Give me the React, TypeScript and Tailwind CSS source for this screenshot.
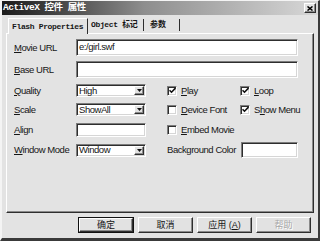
import React from 'react';

const sans = "font-['Liberation_Sans','Noto_Sans_CJK_SC',sans-serif]";
const mono = "font-['Liberation_Mono','Noto_Sans_CJK_SC',monospace]";

// sunken white field, 2px win9x style
const sunken =
  'bg-white border border-t-[#7c7c7c] border-l-[#7c7c7c] border-b-white border-r-white shadow-[inset_1px_1px_0_#2e2e2e,inset_-1px_-1px_0_#d6d6d6]';
const raised =
  'bg-[#e2e2e2] border border-t-white border-l-white border-b-[#2e2e2e] border-r-[#2e2e2e] shadow-[inset_-1px_-1px_0_#8a8a8a]';

function U({ children }: { children: React.ReactNode }) {
  return <span className="underline underline-offset-1">{children}</span>;
}

function Label({ children, w }: { children: React.ReactNode; w: string }) {
  return <div className={`${w} shrink-0 text-[9.5px] tracking-[-0.45px] text-[#161616] leading-none`}>{children}</div>;
}

function Select({ value }: { value: string }) {
  return (
    <div className={`${sunken} w-[70px] h-[13px] flex items-center pl-[2px] pr-px`}>
      <span className="flex-1 text-[9.5px] tracking-[-0.45px] leading-none text-[#161616]">{value}</span>
      <div className={`${raised} w-[10px] h-[9px] flex items-center justify-center`}>
        <svg width="5" height="3" viewBox="0 0 5 3">
          <path d="M0 0h5L2.5 3z" fill="#111" />
        </svg>
      </div>
    </div>
  );
}

function Check({ on, children, w }: { on: boolean; children: React.ReactNode; w?: string }) {
  return (
    <div className={`flex items-center ${w ?? ''}`}>
      <div className={`${sunken} w-[10px] h-[10px] flex items-center justify-center`}>
        {on && (
          <svg width="7" height="7" viewBox="0 0 7 7">
            <path d="M0.5 3.2l2 2 4-4.2" stroke="#111" strokeWidth="1.6" fill="none" />
          </svg>
        )}
      </div>
      <span className="ml-[4px] text-[9.5px] tracking-[-0.45px] leading-none text-[#161616]">{children}</span>
    </div>
  );
}

function Btn({ children, def, off }: { children: React.ReactNode; def?: boolean; off?: boolean }) {
  return (
    <div className={`${def ? 'border border-[#111] w-[56px]' : 'w-[55px]'} h-[16px] flex`}>
      <div
        className={`${raised} flex-1 flex items-center justify-center text-[9px] leading-none ${
          off ? 'text-[#a8a8a8] [text-shadow:1px_1px_0_#fff]' : 'text-[#161616]'
        }`}
      >
        {children}
      </div>
    </div>
  );
}

export default function App() {
  return (
    <div
      className={`${sans} w-[320px] h-[241px] bg-[#e3e3e3] border-l-2 border-t border-l-[#f4f4f4] border-t-[#f4f4f4] border-r-2 border-b-[3px] border-r-[#3a3a3a] border-b-[#3a3a3a] flex flex-col overflow-hidden`}
    >
      {/* title bar */}
      <div className="h-[14px] bg-linear-to-r from-[#1c1c1c] via-[#8e8e8e] via-45% to-[#d8d8d8] flex items-center pl-[1px] pr-[2px]">
        <span className={`${mono} font-bold text-[9.5px] tracking-[-0.5px] text-white leading-none`}>ActiveX 控件 属性</span>
        <div className="flex-1" />
        <div className={`${raised} w-[12px] h-[10px] flex items-center justify-center`}>
          <svg width="6" height="5" viewBox="0 0 6 5">
            <path d="M0.5 0.5l5 4M5.5 0.5l-5 4" stroke="#000" strokeWidth="1.5" />
          </svg>
        </div>
      </div>

      <div className="flex-1 flex flex-col px-[4px]">
        {/* tabs */}
        <div className="mt-[3px] h-[15px] flex items-end pl-[2px]">
          <div className="relative z-10 -mb-px h-[16px] w-[80px] border-t border-l border-t-white border-l-white border-r border-r-[#2e2e2e] bg-[#e3e3e3] flex items-center pl-[3px]">
            <span className={`${mono} font-bold text-[8px] tracking-[-0.35px] leading-none text-[#161616]`}>Flash Properties</span>
          </div>
          <div className="h-[12px] w-[56px] border-r border-r-[#2e2e2e] flex items-center pl-[3px] mb-[2px]">
            <span className={`${mono} font-bold text-[8px] tracking-[-0.35px] leading-none text-[#161616]`}>Object 标记</span>
          </div>
          <div className="h-[12px] w-[36px] border-r border-r-[#2e2e2e] flex items-center pl-[6px] mb-[2px]">
            <span className={`${mono} font-bold text-[8px] leading-none text-[#161616]`}>参数</span>
          </div>
        </div>

        {/* panel */}
        <div className="h-[180px] border border-t-white border-l-white border-r-[#2e2e2e] border-b-[#2e2e2e] shadow-[inset_-1px_-1px_0_#8a8a8a] pl-[7px] flex flex-col">
          <div className="mt-[5px] h-[17px] flex items-center">
            <Label w="w-[62px]">
              <U>M</U>ovie URL
            </Label>
            <div className={`${sunken} w-[222px] h-[17px] flex items-center pl-[2px] text-[9.5px] tracking-[-0.45px] text-[#161616]`}>e:/girl.swf</div>
          </div>
          <div className="mt-[5px] h-[17px] flex items-center">
            <Label w="w-[62px]">
              <U>B</U>ase URL
            </Label>
            <div className={`${sunken} w-[222px] h-[17px]`} />
          </div>
          <div className="mt-[6px] h-[13px] flex items-center">
            <Label w="w-[62px]">
              <U>Q</U>uality
            </Label>
            <Select value="High" />
            <div className="ml-[21px] flex">
              <Check on w="w-[73px]">
                <U>P</U>lay
              </Check>
              <Check on>
                <U>L</U>oop
              </Check>
            </div>
          </div>
          <div className="mt-[6px] h-[13px] flex items-center">
            <Label w="w-[62px]">
              <U>S</U>cale
            </Label>
            <Select value="ShowAll" />
            <div className="ml-[21px] flex">
              <Check on={false} w="w-[73px]">
                <U>D</U>evice Font
              </Check>
              <Check on>
                S<U>h</U>ow Menu
              </Check>
            </div>
          </div>
          <div className="mt-[7px] h-[14px] flex items-center">
            <Label w="w-[62px]">
              <U>A</U>lign
            </Label>
            <div className={`${sunken} w-[70px] h-[14px]`} />
            <div className="ml-[21px] flex">
              <Check on={false}>
                <U>E</U>mbed Movie
              </Check>
            </div>
          </div>
          <div className="mt-[6px] h-[14px] flex items-center">
            <Label w="w-[62px]">
              <U>W</U>indow Mode
            </Label>
            <Select value="Window" />
            <div className="ml-[21px] flex items-center">
              <Label w="w-[74px]">Background Color</Label>
              <div className={`${sunken} w-[57px] h-[16px]`} />
            </div>
          </div>
        </div>

        {/* buttons */}
        <div className="mt-[4px] flex justify-end gap-[4px] pr-[3px]">
          <Btn def>确定</Btn>
          <Btn>取消</Btn>
          <Btn>
            应用 (<U>A</U>)
          </Btn>
          <Btn off>帮助</Btn>
        </div>
      </div>
    </div>
  );
}
